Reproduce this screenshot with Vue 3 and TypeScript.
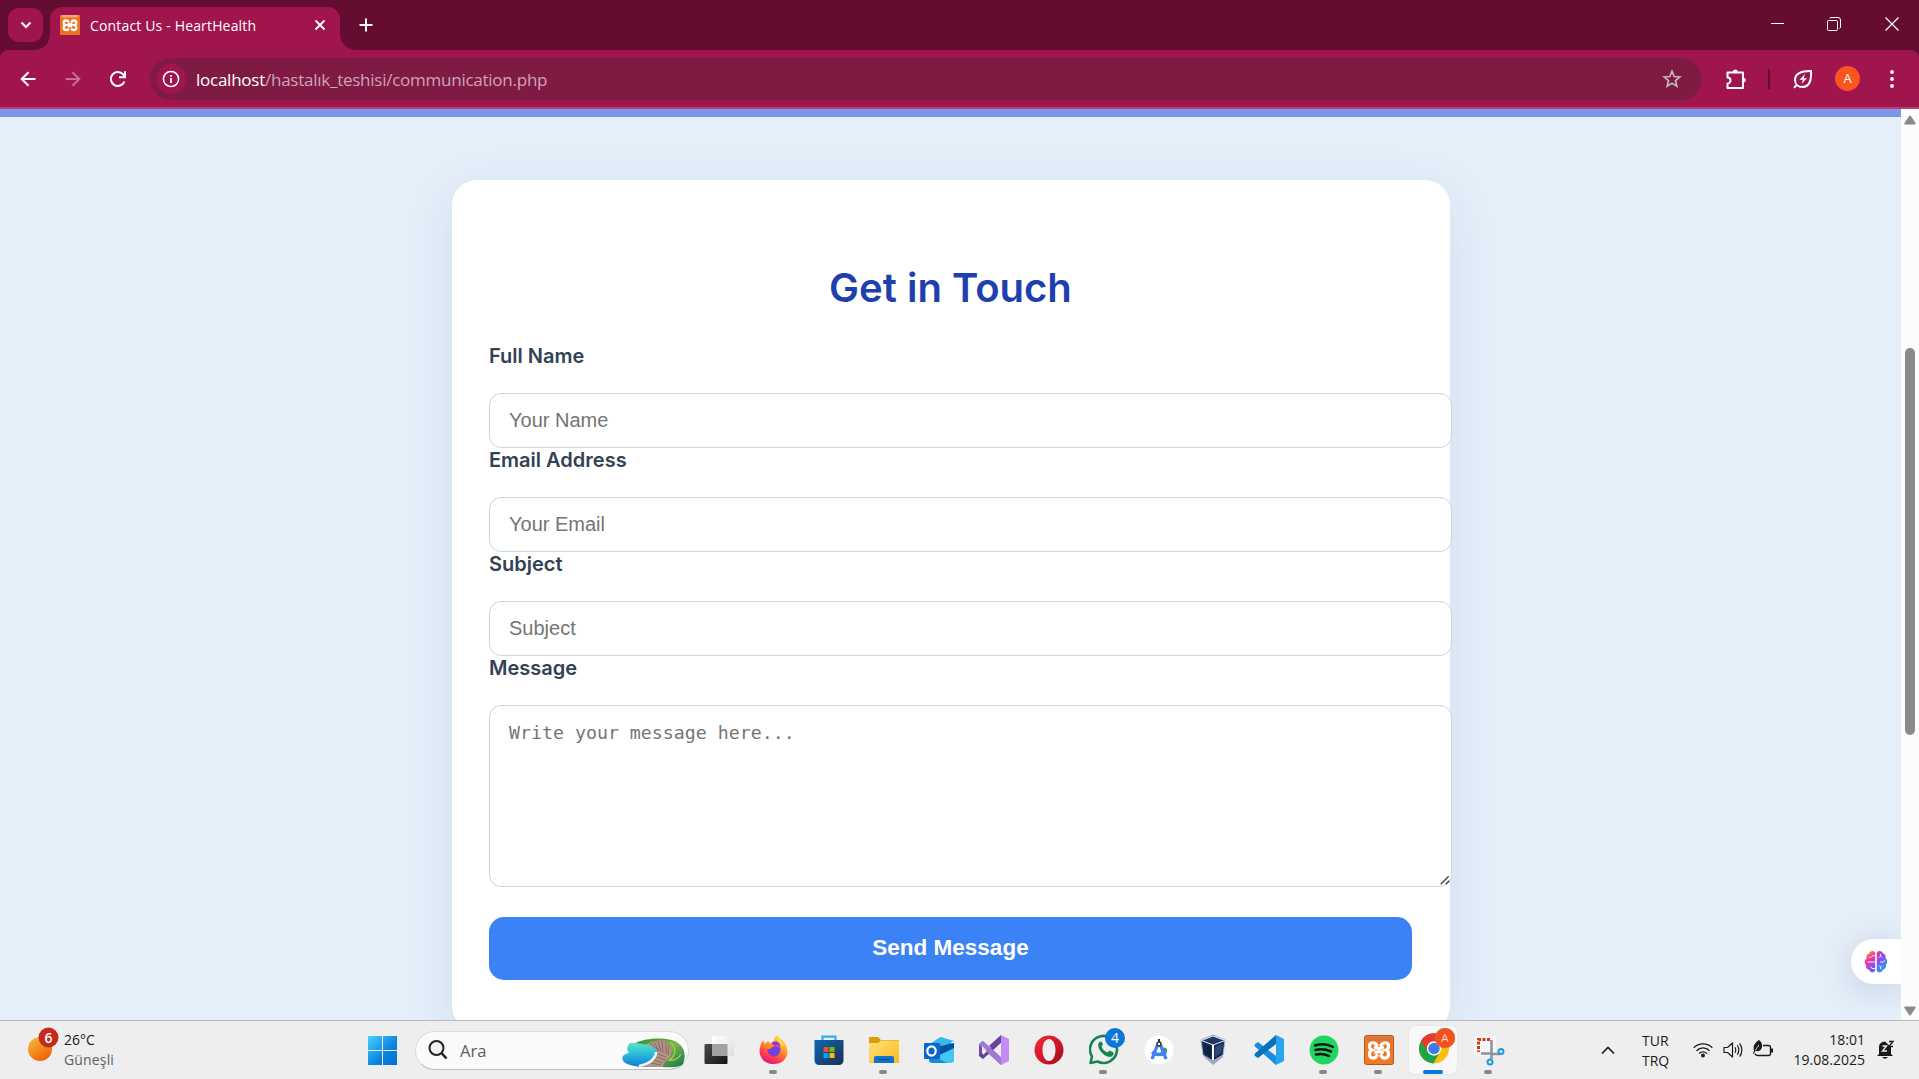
<script setup lang="ts">
import { ref } from 'vue'

interface Field { label: string; placeholder: string; type: string }
interface TaskApp { id: string; running?: boolean; active?: boolean }

const fields: Field[] = [
  { label: 'Full Name', placeholder: 'Your Name', type: 'text' },
  { label: 'Email Address', placeholder: 'Your Email', type: 'email' },
  { label: 'Subject', placeholder: 'Subject', type: 'text' },
]
const apps: TaskApp[] = [
  { id: 'taskview' },
  { id: 'firefox', running: true },
  { id: 'store' },
  { id: 'explorer', running: true },
  { id: 'outlook' },
  { id: 'vstudio' },
  { id: 'opera' },
  { id: 'whatsapp', running: true },
  { id: 'android' },
  { id: 'vbox' },
  { id: 'vscode' },
  { id: 'spotify', running: true },
  { id: 'xampp', running: true },
  { id: 'chrome', active: true },
  { id: 'snip', running: true },
]
const values = ref<string[]>(['', '', ''])
const message = ref('')
</script>

<template>
  <div class="screen">
    <header class="tabstrip">
      <button class="tabsearch">
        <svg width="12" height="8" viewBox="0 0 12 8"><path d="M1.5 1.5 6 6l4.500-4.500" fill="none" stroke="#fff" stroke-width="2" /></svg>
      </button>
      <div class="tab">
        <svg class="favicon" width="20" height="20" viewBox="0 0 32 32">
          <rect width="32" height="32" rx="1" fill="#ee7220" /><rect x="3" y="0" width="26" height="4" fill="#f3a873" />
          <path d="M14 11.500C12 7.500 6 8 6 12.500c0 2 1 3 2.500 3.500C7 16.500 6 18 6 20c0 5 6 5.500 8 1.500M18 11.500c2-4 8-3.500 8 1 0 2-1 3-2.500 3.500 1.500.5 2.500 2 2.500 4 0 5-6 5.500-8 1.500M12.500 13.500l3.500 1.500 3.500-1.500M12.500 18.500l3.500-1.500 3.500 1.500" fill="none" stroke="#fff" stroke-width="3.800" />
        </svg>
        <span class="tabtitle">Contact Us - HeartHealth</span>
        <svg class="tabclose" width="12" height="12" viewBox="0 0 12 12"><path d="M1.500 1.500l9 9m0-9l-9 9" stroke="#fff" stroke-width="1.800" /></svg>
      </div>
      <svg class="newtab" width="14" height="14" viewBox="0 0 14 14"><path d="M7 .5v13M.5 7h13" stroke="#fff" stroke-width="2" /></svg>
      <div class="wincontrols">
        <svg width="14" height="14" viewBox="0 0 14 14"><path d="M0 6.500h13" stroke="#fff" /></svg>
        <svg width="14" height="14" viewBox="0 0 14 14" fill="none" stroke="#fff"><rect x=".5" y="3.500" width="10" height="10" rx="1" /><path d="M3 1.500q0-1 1-1h7q2.500 0 2.500 2.500v7q0 1-1 1.500" /></svg>
        <svg width="14" height="14" viewBox="0 0 14 14"><path d="M.5.500l13 13m0-13l-13 13" stroke="#fff" stroke-width="1.200" /></svg>
      </div>
    </header>

    <nav class="toolbar">
      <svg class="back" width="16" height="16" viewBox="0 0 16 16" fill="none" stroke="#fff" stroke-width="2"><path d="M15.500 8H2M8.500 1.200 1.700 8l6.800 6.800" /></svg>
      <svg class="forward" width="16" height="16" viewBox="0 0 16 16" fill="none" stroke="#c96c95" stroke-width="2"><path d="M.5 8H14M7.500 1.200 14.300 8l-6.800 6.800" /></svg>
      <svg class="reload" width="18" height="18" viewBox="0 0 18 18" fill="none" stroke="#fff" stroke-width="2"><path d="M15.400 11.500A7 7 0 1 1 14 4.200L15.800 6.500" /><path d="M16 1.200v6h-6" /></svg>
      <div class="omnibox">
        <span class="info">
          <svg width="18" height="18" viewBox="0 0 18 18" fill="none" stroke="#fff"><circle cx="9" cy="9" r="7.600" stroke-width="1.500" /><path d="M9 8v5M9 5v1.700" stroke-width="1.800" /></svg>
        </span>
        <span class="url"><b>localhost</b>/hastalık_teshisi/communication.php</span>
        <svg class="star" width="20" height="20" viewBox="0 0 20 20" fill="none" stroke="#c4b3bd" stroke-width="1.700"><path d="M10 2.200l2.200 5.300 5.700.4-4.400 3.700 1.400 5.600L10 14.200l-4.900 3 1.400-5.600L2.100 7.900l5.700-.4z" /></svg>
      </div>
      <svg class="ext" width="22" height="22" viewBox="0 0 22 22" fill="none" stroke="#fff" stroke-width="2"><path d="M2.500 4.500h15.500v15.500H2.500v-4.500a3 3 0 0 0 0-6z" stroke-linejoin="round" /><path d="M7.800 4a2.500 2.500 0 0 1 5 0zM18.500 9.800a2.300 2.300 0 0 1 0 4.600z" fill="#fff" stroke="none" /></svg>
      <i class="divider"></i>
      <svg class="leaf" width="20" height="20" viewBox="0 0 20 20" fill="none" stroke="#fff" stroke-width="2"><path d="M18 2C9 1.800 2 4 2 11c0 4.500 3.500 7 7.500 7C17 18 18.500 10 18 2zM4 15.500 1 18.800" /><path d="M12 5 6.500 10.800h3.300l-1.300 4 5.500-5.500h-3.300z" fill="#fff" stroke="none" /></svg>
      <span class="avatar">A</span>
      <svg class="kebab" width="4" height="18" viewBox="0 0 4 18" fill="#fff"><circle cx="2" cy="2" r="1.900" /><circle cx="2" cy="9" r="1.900" /><circle cx="2" cy="16" r="1.900" /></svg>
    </nav>

    <div class="viewport">
      <main class="page">
        <div class="heroedge"></div>
        <form class="card" @submit.prevent>
          <h2>Get in Touch</h2>
          <template v-for="(f, i) in fields" :key="f.label">
            <label>{{ f.label }}</label>
            <input v-model="values[i]" :type="f.type" :placeholder="f.placeholder" />
          </template>
          <label>Message</label>
          <div class="messagebox">
            <textarea v-model="message" placeholder="Write your message here..."></textarea>
            <svg class="grip" width="10" height="10" viewBox="0 0 10 10"><path d="M.7 9.300 8.700 1.300M5.700 9.300 9.300 5.700" stroke="#4a4a4a" stroke-width="1.500" /></svg>
          </div>
          <button type="submit">Send Message</button>
        </form>
        <div class="assistant">
          <svg width="24" height="24" viewBox="0 0 24 24">
            <defs><linearGradient id="brain" x1="0" y1="0" x2="24" y2="24" gradientUnits="userSpaceOnUse"><stop offset=".12" stop-color="#ffa51f" /><stop offset=".3" stop-color="#f0369b" /><stop offset=".55" stop-color="#8450f0" /><stop offset=".85" stop-color="#19a5ff" /></linearGradient></defs>
            <path d="M11.200 2.500C9 .2 5.800.8 5 3.500 2.500 4 1.800 6.500 2.500 8.200.3 9.800.3 13.500 2.200 15c-.8 2.500.8 4.500 3 4.800 1 3 4.500 3.500 6 1z" fill="url(#brain)" />
            <path d="M12.800 2.500C15 .2 18.200.8 19 3.500c2.500.5 3.200 3 2.500 4.700 2.200 1.600 2.200 5.300.3 6.800.8 2.500-.8 4.500-3 4.800-1 3-4.500 3.500-6 1z" fill="url(#brain)" />
            <path d="M3.500 12H11M5.500 7.500h1.500L8.500 5.700H11M6.500 16.500l1.500 2h3M15 7.500l1.500-1.500V4M16.500 6l1.500 1.500M21 10.500l-2 1.500h-3M16.500 19v-2l-1.500-1.500M16.500 17l1.500-1.500" fill="none" stroke="#f6e9ff" />
          </svg>
        </div>
      </main>
      <aside class="scrollbar">
        <svg width="12" height="10" viewBox="0 0 12 10"><path d="M6 1.500 10.700 8.500H1.300z" fill="#8a8a8a" stroke="#8a8a8a" stroke-width="2" stroke-linejoin="round" /></svg>
        <i class="thumb"></i>
        <svg width="12" height="10" viewBox="0 0 12 10"><path d="M6 8.500 1.300 1.500h9.400z" fill="#8a8a8a" stroke="#8a8a8a" stroke-width="2" stroke-linejoin="round" /></svg>
      </aside>
    </div>

    <footer class="taskbar">
      <div class="weather">
        <svg width="32" height="36" viewBox="0 0 32 36">
          <defs><linearGradient id="sun" x1="0" y1="0" x2=".6" y2="1"><stop offset="0" stop-color="#f0c13a" /><stop offset="1" stop-color="#f1640c" /></linearGradient></defs>
          <circle cx="12" cy="22" r="12" fill="url(#sun)" /><circle cx="20.500" cy="10.500" r="10" fill="#c42b1c" />
          <text x="20.500" y="15.500" text-anchor="middle" font-size="14" font-weight="600" fill="#fff">6</text>
        </svg>
        <div class="forecast"><span>26°C</span><span class="muted">Güneşli</span></div>
      </div>
      <div class="dock">
        <div class="slot">
          <svg width="29" height="29" viewBox="0 0 29 29"><defs><linearGradient id="win" x1="0" y1="0" x2="29" y2="29" gradientUnits="userSpaceOnUse"><stop offset="0" stop-color="#4cd1ff" /><stop offset=".6" stop-color="#0a84dc" /><stop offset="1" stop-color="#0070d4" /></linearGradient></defs><path d="M0 0h14v14H0zM15 0h14v14H15zM0 15h14v14H0zM15 15h14v14H15z" fill="url(#win)" /></svg>
        </div>
        <div class="searchbox">
          <svg width="20" height="20" viewBox="0 0 20 20" fill="none" stroke="#222" stroke-width="2"><circle cx="8.500" cy="8" r="7" fill="#f0f0f2" /><path d="M13.500 13l5 5.500" stroke-width="2.600" /></svg>
          <span>Ara</span>
          <svg class="cove" width="64" height="30" viewBox="0 0 64 30">
            <defs><linearGradient id="sea" x1="0" y1="0" x2="0" y2="1"><stop offset="0" stop-color="#5de8c0" /><stop offset=".5" stop-color="#27b9dc" /><stop offset="1" stop-color="#1679cf" /></linearGradient>
              <linearGradient id="hill" x1="0" y1="0" x2="1" y2="1"><stop offset="0" stop-color="#2d8a35" /><stop offset=".5" stop-color="#7ab648" /><stop offset="1" stop-color="#14764a" /></linearGradient></defs>
            <path d="M8 5 30 4l8 7-4 17c-10 2-26 1-32-4-4-5 0-8 5-9-1-2-4-4 1-10z" fill="url(#sea)" />
            <path d="M14 5c12-6 36-6 43 1 6 4 7 13 4 20-3 4-18 4-25 2l5-19z" fill="url(#hill)" />
            <path d="M23 6c9-3 16-5 21-3 7 5 7 15 1 19-3 2-3 5-5 7H19c9-3 16-9 16-16-2-4-6-5-12-7z" fill="#b39384" />
            <path d="M28 5l8 7M32 4l5 9M36 3l3 11M40 3l1 12M44 4l0 12M47 7l-1 10M36 16l8 3M35 19l8 3M32 22l9 3M29 25l10 2" fill="none" stroke="#7d5e5c" stroke-width=".8" />
            <path d="M34 14c0 6-6 12-17 14" fill="none" stroke="#eaf6fa" stroke-width="2.500" />
            <path d="M48 4c7 5 6 14-1 18 5 1 9-1 12-6" fill="none" stroke="#a6cb4b" stroke-width="1.400" />
          </svg>
        </div>
        <div v-for="a in apps" :key="a.id" class="slot" :class="[a.id, { active: a.active }]">
          <svg v-if="a.id === 'taskview'" width="32" height="32" viewBox="0 0 32 32"><defs><linearGradient id="tvd" x2="1" y2="1"><stop offset="0" stop-color="#4a4a48" /><stop offset="1" stop-color="#151515" /></linearGradient><linearGradient id="tvl" x2="1" y2="1"><stop offset="0" stop-color="#fff" /><stop offset="1" stop-color="#ddd" /></linearGradient></defs><rect x="2.500" y="10" width="23" height="20" rx="1" fill="url(#tvd)" /><rect x="10" y="2" width="22" height="20" rx="1" fill="url(#tvl)" /><path d="M10 10h15.500v12H10z" fill="#a2a2a2" /></svg>
          <svg v-else-if="a.id === 'firefox'" width="32" height="32" viewBox="0 0 32 32"><defs><linearGradient id="ff" x1=".8" y1="0" x2=".3" y2="1"><stop offset="0" stop-color="#fff04a" /><stop offset=".45" stop-color="#ff9226" /><stop offset=".75" stop-color="#ff3b4d" /><stop offset="1" stop-color="#e5158b" /></linearGradient></defs><path d="M19 1c2 3 5 4 7 7 7 9 3 22-10 22S-1 19 3 10l2-4 2 4 3-3 3 3c2 0 2-1 3-3 0-3 1-5 3-6z" fill="url(#ff)" /><circle cx="16" cy="16" r="6.500" fill="#7542d5" /><path d="M13 10c5-3 8 0 8 4-2-3-5-2-8 0-1 2-4 1-6-1 2-2 4-3 6-3z" fill="#ff8b20" /><path d="M13 9c4-3 10-1 9 4-2-2-4-2-5-1z" fill="#a32fd5" /><path d="M20 2c1 4 4 6 6 9-1 1-2 0-3-1-3-2-4-5-3-8z" fill="#ffe14b" /></svg>
          <svg v-else-if="a.id === 'store'" width="32" height="32" viewBox="0 0 32 32"><defs><linearGradient id="st" x2="1" y2="1"><stop offset="0" stop-color="#0c68b5" /><stop offset="1" stop-color="#1d2e53" /></linearGradient></defs><path d="M9.500 7V2.700h13V7" fill="none" stroke="#28b7ea" stroke-width="2.200" /><path d="M1.500 6h29v20q0 5-5 5h-19q-5 0-5-5z" fill="url(#st)" /><path d="M10.500 13H15.500v5h-5z" fill="#f25022" /><path d="M16.500 13H21.500v5h-5z" fill="#7fba00" /><path d="M10.500 19H15.500v5h-5z" fill="#00a4ef" /><path d="M16.500 19H21.500v5h-5z" fill="#ffb900" /></svg>
          <svg v-else-if="a.id === 'explorer'" width="32" height="32" viewBox="0 0 32 32"><defs><linearGradient id="fo" x2="1" y2="1"><stop offset="0" stop-color="#ffe07c" /><stop offset="1" stop-color="#fabb1d" /></linearGradient></defs><path d="M1 4q0-1 1-1h8l3 3h17q1 0 1 1v5H1z" fill="#dd9c08" /><path d="M1 9h9l3-2.500h18V29H1z" fill="url(#fo)" /><path d="M6 29v-5q0-2 2-2h16q2 0 2 2v5z" fill="#1273cc" /><path d="M10 25.500h12" stroke="#064f9d" stroke-width="1.500" /></svg>
          <svg v-else-if="a.id === 'outlook'" width="32" height="32" viewBox="0 0 32 32"><path d="M6 11 18 3l13 8v5H6z" fill="#1489de" /><path d="M18 3 8 9l13 3 10-5z" fill="#35bae9" /><path d="M6 15 31 9v6L18 23z" fill="#0650a1" /><path d="M31 14v12q0 3-3 3H10q-4 0-4-3z" fill="#42c7f4" /><path d="M6 20l18 9H10q-4 0-4-3z" fill="#158fd1" /><rect x="1" y="9" width="16" height="16" rx="1" fill="#0867c9" /><ellipse cx="8.500" cy="17" rx="4.200" ry="4.700" fill="none" stroke="#fff" stroke-width="2.200" /></svg>
          <svg v-else-if="a.id === 'vstudio'" width="32" height="32" viewBox="0 0 32 32"><path d="M1 10l4-3v18l-4-3z" fill="#744ba7" /><path d="M5 7l18 16v8L1 11z" fill="#9872ce" /><path d="M5 25 23 9V1L1 21z" fill="#66429b" /><path d="M5 7l8 6.500-8 7.500z" fill="#ededed" /><path d="M5 7 1 10l22 21v-8z" fill="#a277d9" /><path d="M23 1l8 4v22l-8 4z" fill="#c28cf4" /><path d="M23 9v14l-7-7z" fill="#ededed" /><path d="M4 12l4 4-4 4z" fill="#ededed" /></svg>
          <svg v-else-if="a.id === 'opera'" width="32" height="32" viewBox="0 0 32 32"><defs><linearGradient id="op" x2="1" y2="1"><stop offset="0" stop-color="#ff2737" /><stop offset="1" stop-color="#a00b18" /></linearGradient></defs><path fill-rule="evenodd" d="M16 1.500a14.500 14.500 0 1 0 0 29 14.500 14.500 0 0 0 0-29zm0 3.500c4 0 6.500 5 6.500 11S20 27 16 27 9.500 22 9.500 16 12 5 16 5z" fill="url(#op)" /></svg>
          <svg v-else-if="a.id === 'whatsapp'" width="36" height="38" viewBox="0 0 36 38" class="badgeicon"><path d="M1.500 35 3 28.500A13.500 13.500 0 1 1 8.500 33.500z" fill="none" stroke="#158450" stroke-width="2.600" stroke-linejoin="round" /><path d="M10.500 14c-5 4 5 17 12 14.500 2-1 2.500-3 2-4l-4-2-2 2c-3-1-5-3-6-6l1.500-2-1.500-3z" fill="#158450" /><circle cx="26" cy="10" r="10" fill="#0a78d4" /><text x="26" y="15" text-anchor="middle" font-size="14" fill="#fff">4</text></svg>
          <svg v-else-if="a.id === 'android'" width="32" height="32" viewBox="0 0 32 32"><circle cx="16" cy="16" r="14" fill="#fff" stroke="#fff" stroke-width="1.200" stroke-dasharray="2.500 1.500" /><circle cx="21" cy="16.500" r="3" fill="#2fa352" /><path d="M14.500 11 9 25m8.500-14L23 25M9 18q7 5 14 0" fill="none" stroke="#3d83f2" stroke-width="3.400" /><circle cx="16" cy="10" r="2" fill="#fff" stroke="#253142" stroke-width="1.500" /><path d="M16 5v3" stroke="#253142" stroke-width="2" /></svg>
          <svg v-else-if="a.id === 'vbox'" width="32" height="32" viewBox="0 0 32 32"><path d="M6 23l9 8 10-8v-4H6z" fill="#a5a6b5" /><path d="M3 6l12-5 12 5-2 15-10 6-10-6z" fill="#172b51" stroke="#9bb6d4" /><path d="M3.500 6.500 15 11l12-4.500L15 2z" fill="#203763" stroke="#e5edf7" /><path d="M15 11v15" stroke="#fff" stroke-width="2" /><path d="M6 10l7 3v10l-6-4z" fill="#0d2145" /><path d="M25 10l-8 3v10l6-4z" fill="#2a4a7b" /></svg>
          <svg v-else-if="a.id === 'vscode'" width="32" height="32" viewBox="0 0 32 32"><path d="M5 8 2 10q-1 1 0 2.500L23 31v-9z" fill="#178ddd" /><path d="M23 1 2 19.500q-1 1 0 2.500l3 2L23 10z" fill="#0873ba" /><path d="M23 1l8 4v22l-8 4z" fill="#27a5ef" /></svg>
          <svg v-else-if="a.id === 'spotify'" width="32" height="32" viewBox="0 0 32 32"><circle cx="16" cy="16" r="14.500" fill="#1ed760" /><path d="M7 11.500q10-3 18 1.500M7.500 16q8-2 15.500 1.500M8 20.500q7-1.500 13 1.500" fill="none" stroke="#121212" stroke-width="2.500" stroke-linecap="round" /></svg>
          <svg v-else-if="a.id === 'xampp'" width="32" height="32" viewBox="0 0 32 32"><rect x="1.500" y="1.500" width="29" height="29" rx="2" fill="#ef7725" stroke="#b95619" /><path d="M3 3h26v4H3z" fill="#d97535" /><path d="M14 11.500C12 7.500 6.500 8 6.500 12c0 2 1 3.500 2.500 4-1.500.5-2.500 2-2.500 4 0 5 5.500 5.500 7.500 1.500M18 11.500c2-4 7.500-3.500 7.500.5 0 2-1 3.500-2.500 4 1.500.5 2.500 2 2.500 4 0 5-5.500 5.500-7.500 1.500M12.500 13.500l3.500 1 3.500-1M12.500 18.500l3.500-1 3.500 1" fill="none" stroke="#fff" stroke-width="3.200" stroke-linecap="round" /></svg>
          <svg v-else-if="a.id === 'chrome'" width="36" height="38" viewBox="0 0 36 38" class="badgeicon"><circle cx="15" cy="20.500" r="15" fill="#fbbf0f" /><path d="M15 20.500 2 13a15 15 0 0 1 26-.5z" fill="#e33b2e" /><path d="M2 13a15 15 0 0 0 12.500 22.500l6-11L15 20z" fill="#1ea446" /><path d="M2 13l7 11 6-10h13.500A15 15 0 0 0 2 13z" fill="#e33b2e" /><circle cx="15" cy="20.500" r="7.200" fill="#fff" /><circle cx="15" cy="20.500" r="5.700" fill="#3e7bea" /><circle cx="26" cy="10" r="10" fill="#f4511e" stroke="#cb6a46" stroke-width=".6" /><text x="26" y="14.300" text-anchor="middle" font-size="11.500" fill="#ffd8c9">A</text></svg>
          <svg v-else width="32" height="32" viewBox="0 0 32 32"><rect x="1" y="2" width="22" height="20" fill="#f6f6f6" /><path d="M17 5.500H5.500V18" fill="none" stroke="#d23b14" stroke-width="3" stroke-dasharray="3 1.500" /><path d="M18.500 6v14h9M18.500 19.500H8M18.500 17v8" fill="none" stroke="#8d949b" stroke-width="2.600" /><circle cx="28" cy="17.500" r="2.500" fill="none" stroke="#1e9be0" stroke-width="2" /><circle cx="17" cy="28" r="2.500" fill="none" stroke="#1e9be0" stroke-width="2" /></svg>
          <i v-if="a.running || a.active" class="mark"></i>
        </div>
      </div>
      <div class="tray">
        <svg class="up" width="14" height="9" viewBox="0 0 14 9"><path d="M1 7.500 7 1.500l6 6" fill="none" stroke="#1b1b1b" stroke-width="1.700" /></svg>
        <div class="lines lang"><span>TUR</span><span>TRQ</span></div>
        <svg class="wifi" width="20" height="16" viewBox="0 0 20 16" fill="none" stroke="#1b1b1b" stroke-width="1.300"><path d="M.7 5.700a13 13 0 0 1 18.600 0M3.500 8.700a9 9 0 0 1 13 0M6.200 11.500a5.300 5.300 0 0 1 7.600 0" /><circle cx="10" cy="13.500" r="1.300" fill="#1b1b1b" /></svg>
        <svg class="vol" width="20" height="18" viewBox="0 0 20 18" fill="none" stroke="#1b1b1b" stroke-width="1.200"><path d="M1 6.500h3.500l5-4.500v14l-5-4.500H1z" stroke-linejoin="round" /><path d="M12 6.300q1.500 2.700 0 5.400M14.300 4.300q3 4.700 0 9.400M16.600 2.300q4.500 6.700 0 13.400" /></svg>
        <svg class="bat" width="20" height="18" viewBox="0 0 20 18"><path d="M10 5.500h5.500q2 0 2 2v6q0 2-2 2H5q-2 0-3-1.500" fill="none" stroke="#1b1b1b" stroke-width="1.400" /><path d="M18 8.500h2v4h-2zM0 14c1-2 1-3 .8-4.500C0 5 2 3 6 0c4 3 4 8 1 10.500-2 1-3.500.8-4.500.3L1 14z" fill="#1b1b1b" /><path d="M2.500 10.500Q4 7.500 5.800 5" fill="none" stroke="#eee" stroke-width=".8" /></svg>
        <div class="lines clock"><span>18:01</span><span>19.08.2025</span></div>
        <svg class="bell" width="18" height="20" viewBox="0 0 18 20"><path d="M2 14V7q0-5 6-5.500L14 7v7l2 2H0zM5 17h6q-3 3.500-6 0z" fill="#1b1b1b" /><path d="M5.500 6h4l-4 5h4.500" fill="none" stroke="#eee" stroke-width="1.400" /><path d="M12 1.500h4l-4 5h4" fill="none" stroke="#1b1b1b" stroke-width="1.400" /></svg>
      </div>
    </footer>
  </div>
</template>

<style>
body { margin: 0; overflow: hidden; }
</style>

<style scoped>
* { box-sizing: border-box; }
svg { display: block; flex: none; }
.screen { width: 1919px; height: 1079px; display: flex; flex-direction: column; overflow: hidden; background: #650d31; font-family: "Open Sans", "Noto Sans", sans-serif; }
button { border: 0; padding: 0; }

.tabstrip { height: 50px; flex: none; display: flex; align-items: flex-start; padding-left: 8px; }
.tabsearch { width: 35px; height: 34px; margin-top: 8px; border-radius: 11px; background: #a1154f; display: flex; align-items: center; justify-content: center; }
.tab { position: relative; width: 290px; height: 43px; margin: 7px 0 0 7px; padding-left: 10px; border-radius: 12px 12px 0 0; background: #a1154f; display: flex; align-items: flex-start; }
.tab::before, .tab::after { content: ""; position: absolute; bottom: 0; width: 15px; height: 15px; }
.tab::before { left: -15px; background: radial-gradient(circle at 0 0, transparent 14.500px, #a1154f 15px); }
.tab::after { right: -15px; background: radial-gradient(circle at 100% 0, transparent 14.500px, #a1154f 15px); }
.favicon { margin-top: 8px; }
.tabtitle { margin: 9px 0 0 10px; width: 215px; font-size: 14px; line-height: 20px; letter-spacing: .16px; color: #fff; white-space: nowrap; }
.tabclose { margin: 12px 0 0 9px; }
.newtab { margin: 18px 0 0 19px; }
.wincontrols { margin: 17px 20px 0 auto; display: flex; gap: 43px; }
.wincontrols svg:nth-child(2) { margin-right: 1px; margin-left: -1px; }

.toolbar { height: 59px; flex: none; background: #a1154f; border-bottom: 2px solid #b93f72; border-radius: 8px 8px 0 0; display: flex; align-items: center; }
.back { margin-left: 20px; }
.forward { margin-left: 29px; }
.reload { margin-left: 28px; }
.omnibox { margin-left: 23px; width: 1552px; height: 42px; border-radius: 21px; background: #7f1a43; display: flex; align-items: center; padding-left: 6px; }
.info { width: 30px; height: 30px; border-radius: 50%; background: #a1154f; display: flex; align-items: center; justify-content: center; }
.url { margin-left: 10px; padding-top: 1px; font-size: 17px; letter-spacing: -.25px; color: #d0a3b8; white-space: nowrap; }
.url b { font-weight: 400; color: #fff; }
.star { margin-left: auto; margin-right: 20px; }
.ext { margin-left: 23px; }
.divider { width: 2px; height: 20px; margin-left: 21px; background: #650d31; }
.leaf { margin-left: 23px; }
.avatar { width: 25px; height: 25px; margin-left: 22px; border-radius: 50%; background: #fa5420; color: #fff; font-size: 13px; line-height: 25px; text-align: center; }
.kebab { margin-left: 30px; }

.viewport { height: 911px; flex: none; display: flex; overflow: hidden; }
.page { position: relative; width: 1901px; height: 911px; overflow: hidden; background: #e4effa; }
.heroedge { height: 8px; background: #7a97e9; }
.card { width: 998px; height: 851px; margin: 63px 0 0 452px; padding: 84px 38px 0 37px; border-radius: 25px; background: #fff; box-shadow: 0 12px 50px rgba(30, 41, 100, .085); display: flex; flex-direction: column; font-family: Inter, sans-serif; }
h2 { margin: 0 0 32px; font-size: 40px; line-height: 48px; font-weight: 600; text-align: center; color: #1e40af; }
label { height: 49px; flex: none; font-size: 20px; line-height: 24px; font-weight: 600; color: #334155; }
input, textarea { display: block; width: 963px; flex: none; margin: 0; padding: 0 19px; border: 1px solid #cbd5e1; border-radius: 12px; background: #fff; outline: 0; }
input { height: 55px; font: 20px "Liberation Sans", sans-serif; }
.messagebox { position: relative; width: 963px; }
textarea { height: 182px; padding-top: 15px; font: 18.250px/23px "DejaVu Sans Mono", monospace; resize: none; }
.grip { position: absolute; right: 2px; bottom: 2px; }
::placeholder { color: #757575; opacity: 1; }
.card button { height: 63px; flex: none; margin-top: 30px; padding-bottom: 2px; border-radius: 15px; background: #3b82f6; color: #fff; font: bold 22.500px "Liberation Sans", sans-serif; }
.assistant { position: absolute; right: 0; top: 830px; width: 50px; height: 45px; border-radius: 23px 0 0 23px; background: #fff; box-shadow: 0 5px 35px rgba(0, 20, 60, .14); display: flex; align-items: center; justify-content: center; }

.scrollbar { width: 18px; background: #fcfcfc; display: flex; flex-direction: column; align-items: center; padding: 6px 0 4px; }
.thumb { width: 10px; height: 387px; margin: 223px 0 auto; border-radius: 5px; background: #8a8a8a; }

.taskbar { height: 59px; flex: none; background: #eee; border-top: 1px solid #b8b8bd; display: flex; align-items: center; color: #1b1b1b; font-size: 14px; }
.weather { width: 355px; padding: 6px 0 0 28px; display: flex; height: 58px; }
.forecast, .lines { display: flex; flex-direction: column; line-height: 20px; }
.forecast { margin: 3px 0 0 4px; }
.muted { color: #606060; letter-spacing: .15px; }
.dock { display: flex; align-items: center; }
.slot { position: relative; width: 55px; height: 58px; display: flex; align-items: center; justify-content: center; }
.slot.taskview { margin-right: 1px; }
.slot.active::before { content: ""; position: absolute; left: 3px; top: 5px; width: 48px; height: 48px; border-radius: 5px; background: #f8f8f8; box-shadow: 0 0 1px #bbb; }
.slot svg { position: relative; }
.slot .badgeicon { margin: -6px 0 0 6px; }
.mark { position: absolute; left: 23px; top: 49px; width: 8px; height: 4px; border-radius: 2px; background: #868686; }
.active .mark { left: 17px; width: 20px; background: #0a78d4; }
.searchbox { width: 274px; height: 39px; margin: 0 1px 0 5px; padding: 0 2px 0 12px; border: 1px solid #ddd; border-bottom-color: #bcbcbc; border-radius: 20px; background: #fafafa; display: flex; align-items: center; color: #5c5c5c; font-size: 16.500px; }
.searchbox span { margin-left: 12px; }
.cove { margin: 6px 0 0 auto; }
.tray { margin-left: auto; padding-right: 24px; display: flex; align-items: center; }
.lang { margin: 1px 0 0 27px; width: 28px; }
.wifi { margin-left: 23px; }
.vol { margin-left: 10px; }
.bat { margin-left: 10px; margin-top: -3px; }
.clock { width: 80px; margin-left: 12px; margin-top: -1px; align-items: flex-end; }
.bell { margin-left: 12px; }
</style>
